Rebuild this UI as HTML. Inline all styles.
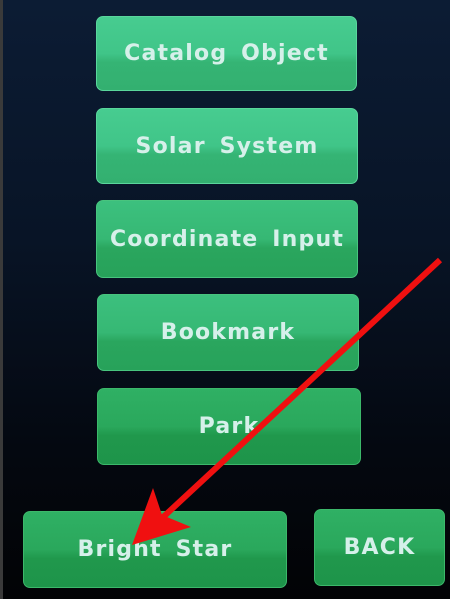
<!DOCTYPE html>
<html><head><style>
html,body{margin:0;padding:0}
body{width:450px;height:599px;overflow:hidden;position:relative;background:linear-gradient(180deg,#0c1c34 0%,#081426 40%,#040810 75%,#020305 100%);font-family:"DejaVu Sans","Liberation Sans",sans-serif}
.edge{position:absolute;left:0;top:0;width:3px;height:599px;background:#3a3a3a}
.b{position:absolute;border-radius:7px;display:flex;align-items:center;justify-content:center;color:#d6f0ea;font-weight:bold;font-size:22px;letter-spacing:1.2px;word-spacing:5px;box-sizing:border-box;border:1px solid #5ad69c}
.t{background:linear-gradient(180deg,#47cc90 0%,#40c588 50%,#35b474 62%,#33b070 100%)}
.m{background:linear-gradient(180deg,#3cc07e 0%,#36b874 50%,#2aa65e 62%,#27a25a 100%);border-color:#48c47e}
.d{background:linear-gradient(180deg,#2fb064 0%,#2aa85c 50%,#20984c 62%,#1e944a 100%);border-color:#3cb86a}
</style></head><body>
<div class="edge"></div>
<div class="b t" style="left:96px;top:16px;width:261px;height:75px">Catalog Object</div>
<div class="b t" style="left:96px;top:108px;width:262px;height:76px">Solar System</div>
<div class="b m" style="left:96px;top:200px;width:262px;height:78px">Coordinate Input</div>
<div class="b m" style="left:97px;top:294px;width:262px;height:77px">Bookmark</div>
<div class="b d" style="left:97px;top:388px;width:264px;height:77px">Park</div>
<div class="b d" style="left:23px;top:511px;width:264px;height:77px">Bright Star</div>
<div class="b d" style="left:314px;top:509px;width:131px;height:77px">BACK</div>
<svg width="450" height="599" style="position:absolute;left:0;top:0">
<line x1="440" y1="260" x2="160" y2="520" stroke="#f01010" stroke-width="6"/>
<polygon points="132,545 153,488 162,515 191,527" fill="#f01010"/>
</svg>
</body></html>
